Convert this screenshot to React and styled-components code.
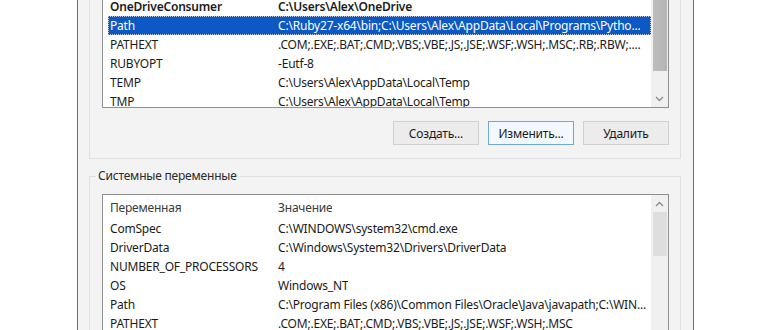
import React from "react";
import styled, { createGlobalStyle } from "styled-components";

const userVars = [
  { name: "OneDriveConsumer", value: "C:\\Users\\Alex\\OneDrive", bold: true },
  { name: "Path", value: "C:\\Ruby27-x64\\bin;C:\\Users\\Alex\\AppData\\Local\\Programs\\Pytho...", selected: true },
  { name: "PATHEXT", value: ".COM;.EXE;.BAT;.CMD;.VBS;.VBE;.JS;.JSE;.WSF;.WSH;.MSC;.RB;.RBW;...." },
  { name: "RUBYOPT", value: "-Eutf-8" },
  { name: "TEMP", value: "C:\\Users\\Alex\\AppData\\Local\\Temp" },
  { name: "TMP", value: "C:\\Users\\Alex\\AppData\\Local\\Temp" },
];

const systemVars = [
  { name: "ComSpec", value: "C:\\WINDOWS\\system32\\cmd.exe" },
  { name: "DriverData", value: "C:\\Windows\\System32\\Drivers\\DriverData" },
  { name: "NUMBER_OF_PROCESSORS", value: "4" },
  { name: "OS", value: "Windows_NT" },
  { name: "Path", value: "C:\\Program Files (x86)\\Common Files\\Oracle\\Java\\javapath;C:\\WIN..." },
  { name: "PATHEXT", value: ".COM;.EXE;.BAT;.CMD;.VBS;.VBE;.JS;.JSE;.WSF;.WSH;.MSC" },
];

function Chevron({ up }) {
  return (
    <svg width="9" height="6" viewBox="0 0 9 6">
      <polyline
        points={up ? "1,5 4.5,1.5 8,5" : "1,1 4.5,4.5 8,1"}
        fill="none"
        stroke="#8a8a8a"
        strokeWidth="1.3"
      />
    </svg>
  );
}

function VarRow({ item }) {
  return (
    <Row $selected={item.selected} $bold={item.bold}>
      <NameCell>{item.name}</NameCell>
      <ValueCell>{item.value}</ValueCell>
    </Row>
  );
}

export default function App() {
  return (
    <Screen>
      <GlobalStyle />
      <Window>
        <UserGroup>
          <ListBox $height={112} $top={-4}>
            <Rows>
              {userVars.map((v) => (
                <VarRow key={v.name} item={v} />
              ))}
            </Rows>
            <ScrollBar>
              <Thumb $height={74} $dark />
              <Spacer />
              <Arrow><Chevron /></Arrow>
            </ScrollBar>
          </ListBox>
          <Buttons>
            <Button>Создать...</Button>
            <Button $focused>Изменить...</Button>
            <Button>Удалить</Button>
          </Buttons>
        </UserGroup>

        <SystemGroup>
          <Legend>Системные переменные</Legend>
          <ListBox $height={150} $top={10}>
            <Rows>
              <HeaderRow>
                <NameCell>Переменная</NameCell>
                <ValueCell>Значение</ValueCell>
              </HeaderRow>
              {systemVars.map((v) => (
                <VarRow key={v.name + v.value} item={v} />
              ))}
            </Rows>
            <ScrollBar>
              <Arrow><Chevron up /></Arrow>
              <Thumb $height={44} />
              <Spacer />
            </ScrollBar>
          </ListBox>
        </SystemGroup>
      </Window>
    </Screen>
  );
}

const GlobalStyle = createGlobalStyle`
  html, body {
    margin: 0;
    padding: 0;
    background: #ffffff;
    overflow: hidden;
  }
  body {
    font-family: "Noto Sans", "Open Sans", sans-serif;
    font-size: 12px;
    letter-spacing: -0.2px;
    color: #1b1b1b;
  }
`;

const Screen = styled.div`
  width: 770px;
  height: 330px;
  overflow: hidden;
  padding-left: 77px;
  box-sizing: border-box;
`;

const Window = styled.div`
  width: 617px;
  height: 360px;
  box-sizing: border-box;
  border-left: 1px solid #6e6e6e;
  border-right: 1px solid #6e6e6e;
  background: #f3f3f3;
  padding: 0 12px 0 11px;
`;

const UserGroup = styled.div`
  border: 1px solid #e0e0e0;
  border-top: none;
  padding: 0 11px 13px 12px;
`;

const ListBox = styled.div`
  display: flex;
  height: ${(p) => p.$height}px;
  margin-top: ${(p) => p.$top}px;
  box-sizing: border-box;
  border: 1px solid #8f8f8f;
  background: #ffffff;
  overflow: hidden;
`;

const Rows = styled.div`
  flex: 1;
  min-width: 0;
  padding-left: 5px;
`;

const Row = styled.div`
  display: flex;
  height: 19px;
  line-height: 19px;
  padding-left: 2px;
  white-space: nowrap;
  font-weight: ${(p) => (p.$bold ? 600 : 400)};
  background: ${(p) => (p.$selected ? "#0c58c4" : "transparent")};
  color: ${(p) => (p.$selected ? "#ffffff" : "#1b1b1b")};
  outline: ${(p) => (p.$selected ? "1px dotted #b9c9e6" : "none")};
  outline-offset: -1px;
`;

const HeaderRow = styled(Row)`
  height: 22px;
  line-height: 22px;
  margin-top: 2px;
  color: #3a3a3a;
`;

const NameCell = styled.span`
  width: 168px;
  flex: none;
  overflow: hidden;
`;

const ValueCell = styled.span`
  overflow: hidden;
`;

const ScrollBar = styled.div`
  width: 17px;
  flex: none;
  display: flex;
  flex-direction: column;
  align-items: center;
  background: #f0f0f0;
`;

const Thumb = styled.div`
  width: 14px;
  height: ${(p) => p.$height}px;
  flex: none;
  background: ${(p) =>
    p.$dark ? "linear-gradient(90deg, #bdbdbd, #b4b4b4)" : "#dedede"};
`;

const Spacer = styled.div`
  flex: 1;
`;

const Arrow = styled.div`
  height: 17px;
  flex: none;
  display: flex;
  align-items: center;
  justify-content: center;
`;

const Buttons = styled.div`
  display: flex;
  justify-content: flex-end;
  gap: 9px;
  margin-top: 13px;
`;

const Button = styled.button`
  width: 86px;
  height: 24px;
  box-sizing: border-box;
  font-family: inherit;
  font-size: 12px;
  letter-spacing: inherit;
  color: #1b1b1b;
  background: ${(p) => (p.$focused ? "#f2f8fd" : "#ececec")};
  border: 1px solid ${(p) => (p.$focused ? "#6aa8dc" : "#d0d0d0")};
  padding: 0;
`;

const SystemGroup = styled.fieldset`
  margin: 9px 0 0 0;
  padding: 0 11px 0 12px;
  border: 1px solid #e0e0e0;
  min-width: 0;
`;

const Legend = styled.legend`
  margin-left: -6px;
  padding: 0 2px;
  line-height: 16px;
  color: #2a2a2a;
`;
